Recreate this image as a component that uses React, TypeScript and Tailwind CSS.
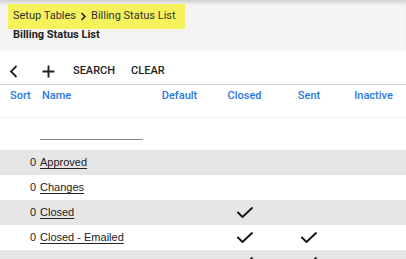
import React from "react";

const Check = () => (
  <svg width="16" height="11" viewBox="0 0 16 11" fill="none">
    <path d="M1 5.5 L5.5 10 L15 1" stroke="#111" strokeWidth="1.8" strokeLinecap="round" strokeLinejoin="round" />
  </svg>
);

const rows = [
  { sort: "0", name: "Approved", closed: false, sent: false },
  { sort: "0", name: "Changes", closed: false, sent: false },
  { sort: "0", name: "Closed", closed: true, sent: false },
  { sort: "0", name: "Closed - Emailed", closed: true, sent: true },
  { sort: "", name: "", closed: true, sent: true },
];

const grid = "grid grid-cols-[38px_109px_65px_65px_64px_65px]";

export default function App() {
  return (
    <div className="w-[406px] h-[259px] overflow-hidden bg-white font-['Roboto',sans-serif]">
      <div className="h-[51px] bg-[#f4f4f4] shadow-[inset_0_5px_4px_-3px_rgba(0,0,0,0.18)] border-b border-[#fafafa] pt-[4px] pl-[8px]">
        <div className="w-[177px] h-[25px] bg-[#f6f25c] flex items-center pl-[5px] text-[11px] text-[#333] gap-[4px]">
          <span>Setup Tables</span>
          <svg width="7" height="9" viewBox="0 0 7 9" fill="none" className="mt-[-1px]">
            <path d="M1.5 1 L5 4.5 L1.5 8" stroke="#222" strokeWidth="1.6" />
          </svg>
          <span>Billing Status List</span>
        </div>
        <div className="pl-[5px] text-[11px] font-bold text-[#1e1e1e] leading-[14px] mt-[-1px]">Billing Status List</div>
      </div>
      <div className="h-[34px] border-b border-[#cfcfcf] flex items-center pt-[8px] pl-[9px] text-[11px] font-medium text-[#222]">
        <svg width="9" height="13" viewBox="0 0 9 13" fill="none">
          <path d="M7.5 1 L2 6.5 L7.5 12" stroke="#222" strokeWidth="1.8" />
        </svg>
        <svg width="13" height="13" viewBox="0 0 13 13" fill="none" className="ml-[24px]">
          <path d="M6.5 0.5 V12.5 M0.5 6.5 H12.5" stroke="#222" strokeWidth="1.9" />
        </svg>
        <span className="ml-[18px]">SEARCH</span>
        <span className="ml-[16px]">CLEAR</span>
      </div>
      <div className={`${grid} h-[33px] border-b border-[#eeeeee] pt-[4px] text-[11px] font-medium text-[#2a78dc] leading-[14px]`}>
        <div className="pl-[10px]">Sort</div>
        <div className="pl-[4px]">Name</div>
        <div className="text-center">Default</div>
        <div className="text-center">Closed</div>
        <div className="text-center">Sent</div>
        <div className="text-center">Inactive</div>
      </div>
      <div className={`${grid} h-[32px]`}>
        <div />
        <div className="pl-[2px] pt-[21px]">
          <div className="w-[103px] border-b border-[#888]" />
        </div>
      </div>
      {rows.map((r, i) => (
        <div
          key={i}
          className={`${grid} h-[25px] items-center text-[11px] text-[#222] font-['Liberation_Sans',Arial,sans-serif] ${i % 2 === 0 ? "bg-[#e6e6e6]" : "bg-white"}`}
        >
          <div className="text-right pr-[2px]">{r.sort}</div>
          <div className="pl-[2px]">
            <span className="underline underline-offset-[2px]">{r.name}</span>
          </div>
          <div />
          <div className="flex justify-center">{r.closed && <Check />}</div>
          <div className="flex justify-center">{r.sent && <Check />}</div>
          <div />
        </div>
      ))}
    </div>
  );
}
